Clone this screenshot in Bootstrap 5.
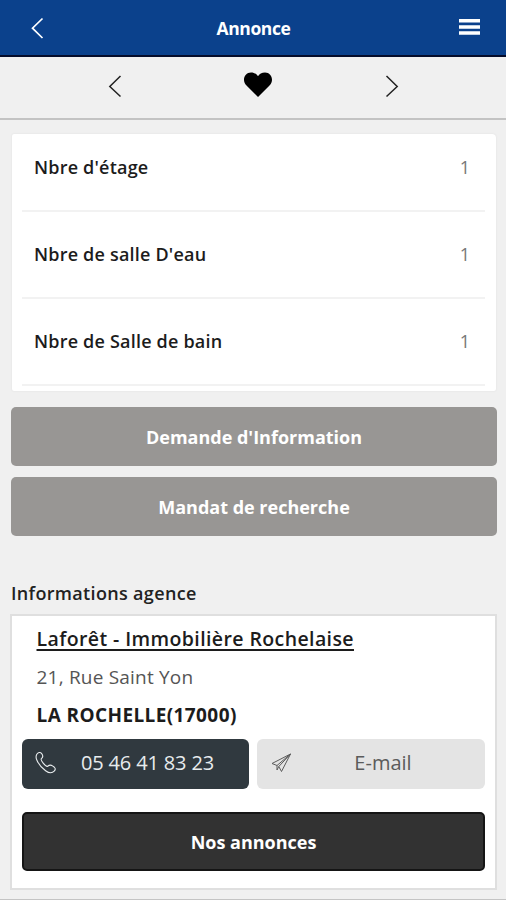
<!DOCTYPE html>
<html lang="fr">
<head>
<meta charset="utf-8">
<meta name="viewport" content="width=device-width, initial-scale=1">
<title>Annonce</title>
<link href="https://cdn.jsdelivr.net/npm/bootstrap@5.3.0/dist/css/bootstrap.min.css" rel="stylesheet">
<style>
body{font-family:"Open Sans","Noto Sans",sans-serif;background:#f0f0f0;color:#1c1c1c;height:900px;overflow:hidden;border-bottom:1px solid #c4c4c4}
svg{display:block;flex:none}
.topbar{height:57px;background:#0b418c;border-bottom:2px solid #050c2b;padding:0 25px 0 30px}
.topbar h1{font-size:17.5px;font-weight:700;letter-spacing:-.4px;line-height:24px;padding-left:4px}
.pager{height:63px;border-bottom:2px solid #c3c3c3;padding:0 106px 4px 107px}
.heart{margin-left:9px;margin-bottom:1px}
.features{margin:14px 10px 0 12px;height:257px;border-radius:2px 4px 2px 2px;padding:0 11px 0 10px;background:#fff;box-shadow:0 0 2px #ddd}
.feature{height:87.3px;border-bottom:2px solid #f2f2f2;padding:1px 15px 0 12px;font-size:18px}
.feature:first-child{height:77.5px;padding-bottom:9px}
.feature-name{font-weight:600;letter-spacing:.2px}
.feature-value{font-weight:400;color:#777}
.big{height:59px;border:0;border-radius:5px;color:#fff;font-size:18px;font-weight:700;padding:2px 0 0;letter-spacing:0}
.big,.big:hover{background:#989694;color:#fff}
.actions{margin:15.5px 9px 0 11px;gap:11px}
.section-title{margin:44px 11px 0;font-size:18px;font-weight:600;line-height:26px;letter-spacing:.33px;color:#222}
.agency{margin:8px 9px 0 10px;height:276px;background:#fff;border:2px solid #dfdfdf;padding:4px 10px 0}
.agency-lines{padding-left:14.5px;line-height:38px;font-size:19px}
.agency-name{font-weight:600;font-size:19.5px;letter-spacing:.4px;color:#1c1c1c;text-underline-offset:3px;text-decoration-thickness:2px}
.street{letter-spacing:.2px;color:#555}
.city{font-weight:700;letter-spacing:.4px}
.contact{gap:8px;margin-top:5px}
.contact .btn{height:50px;border:0;border-radius:6px;font-size:20px;padding:0 11px 1px 13px}
.contact .call,.contact .call:hover{flex:0 0 227px;background:#30393f;color:#e8ecee;letter-spacing:-.15px}
.contact .mail,.contact .mail:hover{flex:1 1 0;background:#e4e4e4;color:#5b5b5b}
.agency .listing,.agency .listing:hover{background:#323232;border:2px solid #151515;margin-top:23px;letter-spacing:0;padding:3px 0 0}
</style>
<script src="https://cdn.jsdelivr.net/npm/bootstrap@5.3.0/dist/js/bootstrap.bundle.min.js" defer></script>
</head>
<body>
<header class="topbar d-flex align-items-center justify-content-between text-white">
  <svg width="15" height="24" viewBox="0 0 15 24" fill="none" stroke="#fff" stroke-width="1.7"><path d="M12.500 2.500 2.500 12.200l10 9.800"/></svg>
  <h1 class="m-0"><span>Annonce</span></h1>
  <svg width="23" height="20" viewBox="0 0 23 20" fill="#fff"><path d="M1 1h21v3.500H1zM1 7.200h21v3.500H1zM1 13.200h21v3.500H1z"/></svg>
</header>
<nav class="pager d-flex align-items-center justify-content-between">
  <svg width="16" height="24" viewBox="0 0 16 24" fill="none" stroke="#222" stroke-width="1.500"><path d="M13.500 2 2.800 12.500l10.700 10"/></svg>
  <svg class="heart" width="30" height="28" viewBox="0 0 30 28" fill="#000"><path d="M15 26 3.500 14.600C-1.500 9.500 1.500 1.500 8 1.500c3.200 0 5.800 1.700 7 3.700 1.200-2 3.800-3.700 7-3.700 6.500 0 9.500 8 4.500 13.100z"/></svg>
  <svg width="16" height="24" viewBox="0 0 16 24" fill="none" stroke="#222" stroke-width="1.500"><path d="m2.500 2 10.700 10.500-10.700 10"/></svg>
</nav>
<main>
  <section class="features">
    <div class="feature d-flex align-items-center justify-content-between"><span class="feature-name">Nbre d'étage</span><span class="feature-value">1</span></div>
    <div class="feature d-flex align-items-center justify-content-between"><span class="feature-name">Nbre de salle D'eau</span><span class="feature-value">1</span></div>
    <div class="feature d-flex align-items-center justify-content-between"><span class="feature-name">Nbre de Salle de bain</span><span class="feature-value">1</span></div>
  </section>
  <div class="actions d-grid">
    <button class="btn big"><span>Demande d'Information</span></button>
    <button class="btn big"><span>Mandat de recherche</span></button>
  </div>
  <h2 class="section-title"><span>Informations agence</span></h2>
  <section class="agency">
    <div class="agency-lines">
      <div><a class="agency-name" href="#">Laforêt - Immobilière Rochelaise</a></div>
      <div class="street"><span>21, Rue Saint Yon</span></div>
      <div class="city"><span>LA ROCHELLE(17000)</span></div>
    </div>
    <div class="contact d-flex">
      <button class="btn call d-flex align-items-center"><svg width="22" height="24" viewBox="0 0 22 24" fill="none" stroke="currentColor" stroke-width="1.100" stroke-linejoin="round"><path d="M1.800 3.300C3 1.500 5.200.8 6.500 2.300c1.700 2 1.500 4-.1 5.400-.8.700-.3 1.900 1.800 4.500 2 2.500 3.400 3.700 4.500 3 1.600-1.200 3.200-1.400 4.800-.3l1.900 1.400c1.200 1 1.100 2.600-.2 3.900-2.200 2.200-5.200 2-8.600-.5-4.200-3-7.200-6.700-8.900-10.900C.8 6.600.8 5 1.800 3.300z"/></svg><span class="flex-grow-1">05 46 41 83 23</span></button>
      <button class="btn mail d-flex align-items-center"><svg width="22" height="22" viewBox="0 0 22 22" fill="none" stroke="currentColor" stroke-width="1" stroke-linejoin="round"><path d="M20.500 2 2 11.500l5 2L20.500 2l-9 17.500-2.700-5L20.500 2M7 13.500V18l1.800-3.500"/></svg><span class="flex-grow-1">E-mail</span></button>
    </div>
    <button class="btn big listing w-100"><span>Nos annonces</span></button>
  </section>
</main>
</body>
</html>
